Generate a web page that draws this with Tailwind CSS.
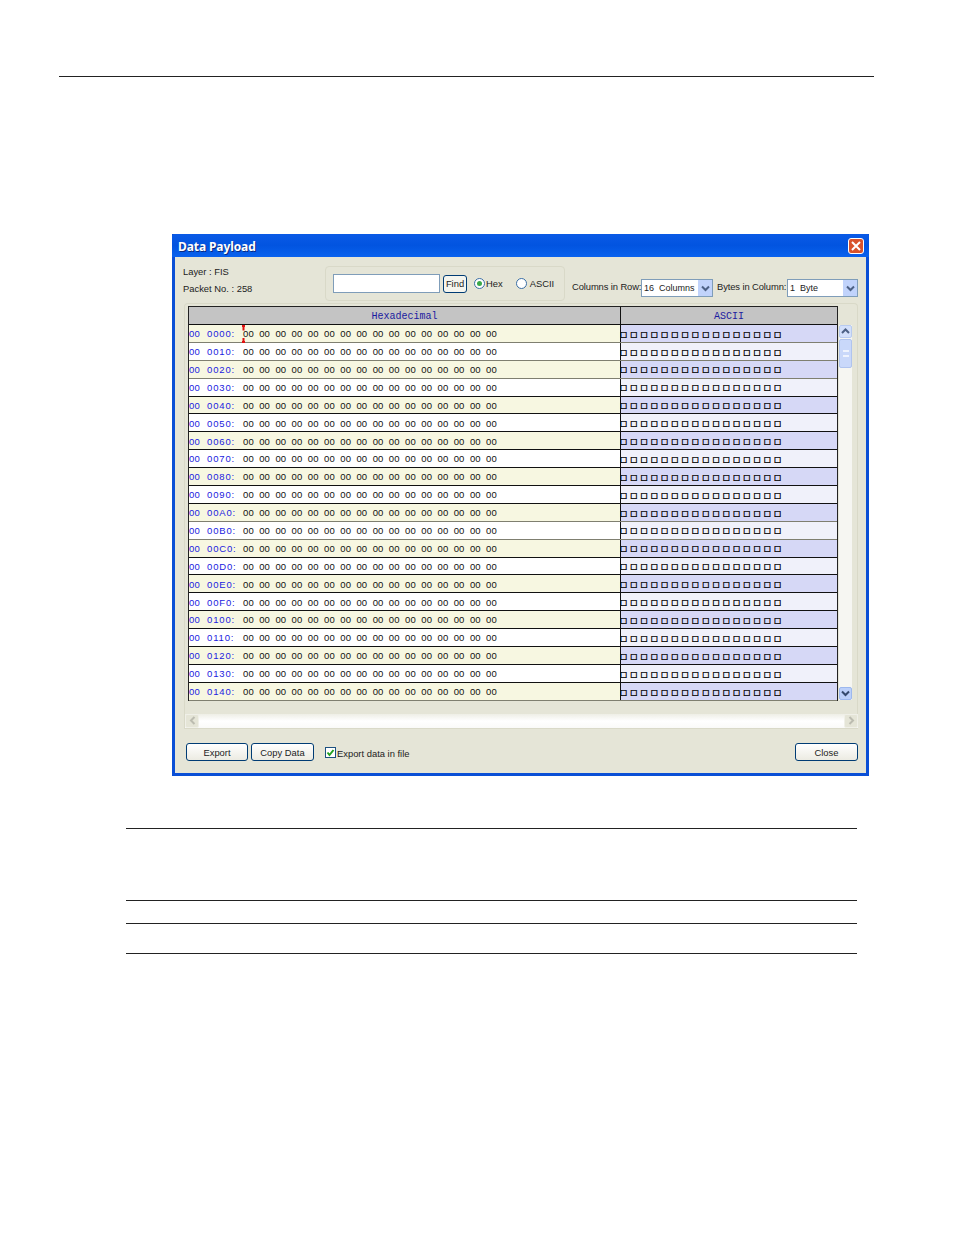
<!DOCTYPE html>
<html lang="en">

<head>
    <meta charset="UTF-8">
    <title>Data Payload</title>
    <script src="https://cdn.jsdelivr.net/npm/@tailwindcss/browser@4"></script>
</head>

<body class="bg-white w-[954px] h-[1235px] overflow-hidden font-['Liberation_Sans',sans-serif]">

    <div class="pt-[76px]">
        <div class="ml-[59px] w-[815px] h-px bg-[#222]"></div>
    </div>

    <!-- dialog -->
    <div class="ml-[172px] mt-[157px] w-[697px] h-[542px] flex flex-col bg-[#e5e5d7] border-x-[3px] border-b-[3px] border-[#0a4fd6] text-[9.4px] text-[#222] leading-none">

        <div class="-mx-[3px] h-[23px] flex items-center justify-between pl-[6px] pr-[5px] rounded-t-[3px] bg-gradient-to-b from-[#0a5ae6] via-[#0254e0] to-[#0a62ee]">
            <span class="pt-[2px] text-white font-bold font-['Noto_Sans',sans-serif] tracking-[-0.1px] text-[12px] [text-shadow:1px_1px_0_#0a2a80]">Data Payload</span>
            <span class="w-[16px] h-[16px] rounded-[3px] bg-[#d9532c] border border-white flex items-center justify-center">
                <svg width="10" height="10" viewBox="0 0 10 10"><path d="M1 1l8 8M9 1l-8 8" stroke="#fff" stroke-width="2" /></svg>
            </span>
        </div>

        <div class="h-[46px] pl-[8px] flex">
            <div class="w-[142px] pt-[10px] flex flex-col gap-[7px]">
                <span class="h-[10px]">Layer : FIS</span>
                <span class="h-[10px]">Packet No. : 258</span>
            </div>
            <div class="mt-[9px] w-[240px] h-[35px] rounded-[4px] border border-[#d9d9c8] flex items-center pl-[7px]">
                <div class="w-[107px] h-[19px] bg-white border border-[#7f9db9]"></div>
                <div class="ml-[3px] w-[24px] h-[18px] bg-[#f5f5ee] border border-[#003c74] rounded-[3px] flex items-center justify-center">Find</div>
                <span class="ml-[7px] w-[11px] h-[11px] rounded-full border border-[#3a6ea5] bg-white flex items-center justify-center">
                    <span class="w-[5px] h-[5px] rounded-full bg-[#3aa84a]"></span>
                </span>
                <span class="ml-px">Hex</span>
                <span class="ml-[13px] w-[11px] h-[11px] rounded-full border border-[#3a6ea5] bg-white"></span>
                <span class="ml-[3px]">ASCII</span>
            </div>
            <div class="mt-[22px] ml-[7px] h-[18px] flex items-center">
                <span class="w-[69px] whitespace-nowrap -mt-[3px] tracking-[-0.1px]">Columns in Row:</span>
                <div class="w-[72px] h-[18px] bg-white border border-[#7f9db9] flex items-center justify-between pl-[2px] text-[9px]">
                    <span class="whitespace-pre">16  Columns</span>
                    <span class="w-[14px] h-[16px] bg-[#c1d3fb] flex items-center justify-center">
                        <svg width="9" height="7" viewBox="0 0 9 7"><path d="M1 1.5l3.5 3.5 3.5-3.5" fill="none" stroke="#4d6185" stroke-width="2" /></svg>
                    </span>
                </div>
                <span class="ml-[4px] w-[70px] whitespace-nowrap -mt-[3px] tracking-[-0.1px]">Bytes in Column:</span>
                <div class="w-[71px] h-[18px] bg-white border border-[#7f9db9] flex items-center justify-between pl-[2px] text-[9px]">
                    <span class="whitespace-pre">1  Byte</span>
                    <span class="w-[14px] h-[16px] bg-[#c1d3fb] flex items-center justify-center">
                        <svg width="9" height="7" viewBox="0 0 9 7"><path d="M1 1.5l3.5 3.5 3.5-3.5" fill="none" stroke="#4d6185" stroke-width="2" /></svg>
                    </span>
                </div>
            </div>
        </div>

        <!-- payload panel -->
        <div class="ml-[9px] w-[674px] h-[426px] border-t border-x border-[#d9d9c8] rounded-t-[4px] pl-[3px] pt-[2px] flex flex-col">
            <div class="relative flex">
                <div class="w-[650px] border-x border-t border-[#222]">
                    <div class="flex h-[18px] bg-[#c4c4c4] border-b border-[#111] font-['Liberation_Mono',monospace] text-[10px] text-[#1a1aa0] items-center">
                        <span class="w-[432px] pt-[2px] text-center border-r border-[#111] h-full flex items-center justify-center">Hexadecimal</span>
                        <span class="flex-1 pt-[2px] text-center">ASCII</span>
                    </div>
                    <div id="rows"></div>
                </div>
                <!-- vertical scrollbar -->
                <div class="mt-[19px] ml-px w-[13px] h-[375px] bg-[#f6f6f2] flex flex-col justify-between">
                    <div>
                        <div class="h-[13px] bg-[#d3e0fb] rounded-[2px] border border-[#b8cbf0] flex items-center justify-center">
                            <svg width="9" height="7" viewBox="0 0 9 7"><path d="M1 5l3.5-3.5 3.5 3.5" fill="none" stroke="#4d6185" stroke-width="2" /></svg>
                        </div>
                        <div class="mt-px h-[29px] bg-[#c9d8fa] rounded-[2px] border border-[#b0c4ee] flex items-center justify-center">
                            <span class="w-[6px] h-[7px] border-y-2 border-[#eef3fe]"></span>
                        </div>
                    </div>
                    <div class="h-[13px] bg-[#bcd0fa] rounded-[2px] border border-[#9db8ee] flex items-center justify-center">
                        <svg width="9" height="7" viewBox="0 0 9 7"><path d="M1 1.5l3.5 3.5 3.5-3.5" fill="none" stroke="#34496e" stroke-width="2" /></svg>
                    </div>
                </div>
                <!-- text caret in first cell -->
                <svg class="absolute left-[53px] top-[19px]" width="5" height="18" viewBox="0 0 5 18">
                    <path d="M1 1h3M2.500 1v4.500M2.500 13v4M1 17h3" stroke="#e01010" stroke-width="2" fill="none" />
                </svg>
            </div>
            <!-- horizontal scrollbar -->
            <div class="-ml-[3px] mt-[13px] w-[673px] h-[15px] bg-gradient-to-b from-[#eeeee6] via-white to-[#fafaf8] border-b border-[#d9d9c8] flex justify-between">
                <div class="w-[14px] h-[14px] bg-[#e5e5d7] border border-[#f0f0e8] rounded-[2px] flex items-center justify-center">
                    <svg width="7" height="9" viewBox="0 0 7 9"><path d="M5.500 1L2 4.500 5.500 8" fill="none" stroke="#bcbcb0" stroke-width="2" /></svg>
                </div>
                <div class="w-[14px] h-[14px] bg-[#e5e5d7] border border-[#f0f0e8] rounded-[2px] flex items-center justify-center">
                    <svg width="7" height="9" viewBox="0 0 7 9"><path d="M1.500 1L5 4.500 1.500 8" fill="none" stroke="#bcbcb0" stroke-width="2" /></svg>
                </div>
            </div>
            <!-- footer -->
            <div class="-ml-[3px] mt-[14px] pl-[1px] flex items-center h-[18px]">
                <button class="w-[62px] h-[18px] pt-[2px] bg-gradient-to-b from-white to-[#ecebe2] border border-[#003c74] rounded-[3px]">Export</button>
                <button class="ml-[3px] w-[63px] h-[18px] pt-[2px] bg-gradient-to-b from-white to-[#ecebe2] border border-[#003c74] rounded-[3px]">Copy Data</button>
                <span class="ml-[11px] mt-[2px] w-[11px] h-[11px] bg-white border border-[#1c5180] flex items-center justify-center">
                    <svg width="9" height="9" viewBox="0 0 9 9"><path d="M1.500 4.500l2 2.500 4-5" fill="none" stroke="#21a121" stroke-width="2" /></svg>
                </span>
                <span class="ml-px mt-[3px]">Export data in file</span>
                <button class="ml-auto -mr-[1px] w-[63px] h-[18px] pt-[2px] bg-gradient-to-b from-white to-[#ecebe2] border border-[#003c74] rounded-[3px]">Close</button>
            </div>
        </div>
    </div>

    <!-- rules under the figure -->
    <div class="ml-[126px] w-[731px]">
        <div class="mt-[52px] h-px bg-[#222]"></div>
        <div class="mt-[71px] h-px bg-[#222]"></div>
        <div class="mt-[22px] h-px bg-[#222]"></div>
        <div class="mt-[29px] h-px bg-[#222]"></div>
    </div>

    <script>
        const byteText = Array(16).fill('00').join(' ');
        const boxText = Array(16).fill('\u25a1').join('');
        const rows = document.getElementById('rows');
        // rows whose bottom rule looks grey in the scan, the rest are near black
        const greyLines = [0, 1, 2, 10, 11, 20];

        for (let i = 0; i < 21; i++) {
            const addr = (i * 16).toString(16).toUpperCase().padStart(4, '0');
            const odd = i % 2 === 0;
            const row = document.createElement('div');
            row.className = 'flex h-[17.9px] border-b items-center ' + (greyLines.includes(i) ? 'border-[#7f7f70]' : 'border-[#111]');
            row.innerHTML = `
                <div class="w-[432px] h-full pt-px flex items-center whitespace-pre text-[9.5px] tracking-[0.12px] [word-spacing:2.64px] border-r border-[#111] ${odd ? 'bg-[#f7f7e1]' : 'bg-white'}"><span class="w-[18px] text-[#1a1ae0]">00</span><span class="w-[36px] tracking-[0.85px] text-[#1a1ae0]">${addr}:</span><span class="text-[#111]">${byteText}</span></div>
                <div class="flex-1 h-full pt-[2px] flex items-center whitespace-pre font-['DejaVu_Sans',sans-serif] font-bold text-[7.5px] tracking-[3.18px] text-[#111] [-webkit-text-stroke:0.4px_#111] ${odd ? 'bg-[#d6d8f6]' : 'bg-[#f0f1fa]'}"><span class="-ml-px">${boxText}</span></div>
            `;
            rows.appendChild(row);
        }
    </script>

</body>

</html>
